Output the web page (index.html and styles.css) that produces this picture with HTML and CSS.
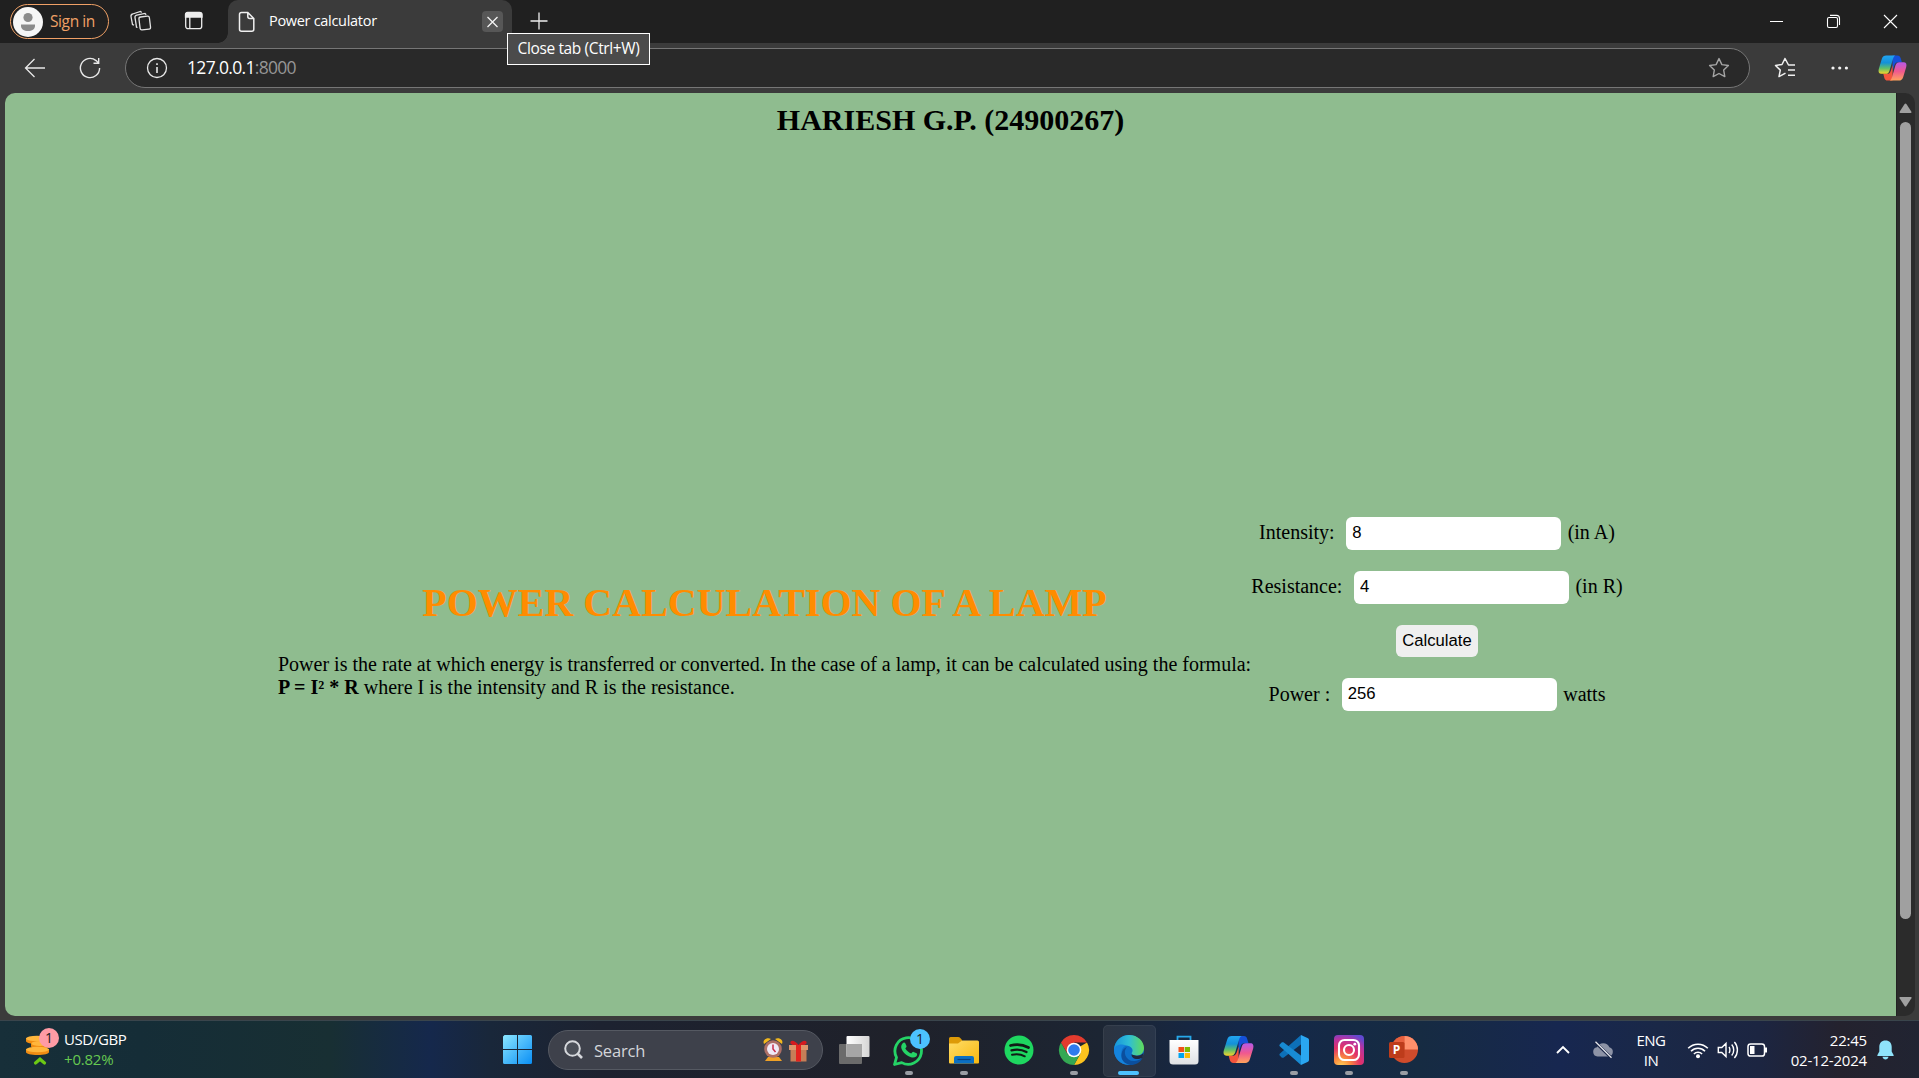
FILE: index.html
```html
<!DOCTYPE html>
<html lang="en">
<head>
<meta charset="utf-8">
<title>Power calculator</title>
<link rel="stylesheet" href="styles.css">
</head>
<body>
<svg width="0" height="0" class="defs" aria-hidden="true">
  <defs>
    <linearGradient id="cpA" x1="0" y1="0" x2="0" y2="1"><stop offset="0" stop-color="#22a5f2"/><stop offset=".4" stop-color="#1391d8"/><stop offset=".7" stop-color="#5fbf6a"/><stop offset="1" stop-color="#f6d32b"/></linearGradient>
    <linearGradient id="cpB" x1="0" y1="0" x2="0" y2="1"><stop offset="0" stop-color="#b659e8"/><stop offset=".5" stop-color="#f0588f"/><stop offset="1" stop-color="#ffa35c"/></linearGradient>
    <symbol id="copilot" viewBox="0 0 30 28">
      <path d="M15 1h5c2 0 3 1.200 3.500 3l1.200 4h-4c-2 0-3 1-3.700 3l-2 6z" fill="#1550d8"/>
      <path d="M15 27h-5c-2 0-3-1.200-3.500-3L5.500 20h4c2 0 3-1 3.700-3l2-6z" fill="#f4553d"/>
      <path d="M8.500 1H18c-1.500.7-2 2-2.600 4l-3.600 12c-.7 2-1.800 3-4 3H3.500C1 20 0 18 .8 15L4 4.500C4.800 2 6.200 1 8.500 1z" fill="url(#cpA)"/>
      <path d="M21.500 27H12c1.500-.7 2-2 2.600-4l3.600-12c.7-2 1.800-3 4-3h4.300c2.500 0 3.500 2 2.700 5L26 23.500c-.8 2.500-2.200 3.500-4.500 3.500z" fill="url(#cpB)"/>
    </symbol>
  </defs>
</svg>

<div class="browser">
  <header class="tabbar">
    <div class="signin">
      <svg width="30" height="30"><circle cx="15" cy="15" r="15" fill="#f6f6f6"/><circle cx="15" cy="10.500" r="4.600" fill="#8b8b8b"/><path d="M8 17.500h14v1.500c0 3-3 5-7 5s-7-2-7-5z" fill="#8b8b8b"/></svg>
      <span>Sign in</span>
    </div>
    <svg class="spaces" width="22" height="22" fill="none" stroke="#e4e4e4" stroke-width="1.300"><rect x="9.500" y="6.500" width="10.500" height="13" rx="1.800" transform="rotate(-7 15 13)"/><path d="M7.500 17.500l-1-.3-1.500-9.500c-.2-1.300.5-2.200 1.700-2.500l8.300-1.800 1.200 1.300"/><path d="M4 15.200l-1.500-.7L1 6.500C.8 5.200 1.500 4.300 2.600 4L10.500 1.500l1.200 1"/></svg>
    <svg class="panes" width="20" height="20" fill="none" stroke="#ededed" stroke-width="1.300"><rect x="1.700" y="1.700" width="16" height="16" rx="2.500"/><path d="M1.500 6V3.500C1.500 2 2.500 1.500 3.500 1.500h12c1.500 0 2.500.8 2.500 2V6z" fill="#ededed"/><path d="M5.800 6v11.500"/></svg>
    <div class="tab">
      <svg width="18" height="22" fill="none" stroke="#f0f0f0" stroke-width="1.500"><path d="M1.500 3.500c0-1.200.8-2 2-2h6.300l6 6v10.800c0 1.200-.8 2-2 2H3.500c-1.200 0-2-.8-2-2zM9.800 1.500v4c0 1.200.8 2 2 2h4"/></svg>
      <span class="tab-title">Power calculator</span>
      <span class="tab-close"><svg width="21" height="21" stroke="#f3f3f3" stroke-width="1.300"><path d="M5.500 6l10 10m0-10l-10 10"/></svg></span>
      <div class="tooltip">Close tab (Ctrl+W)</div>
    </div>
    <svg class="newtab" width="18" height="18" stroke="#eee" stroke-width="1.300"><path d="M9 .5v17M.5 9h17"/></svg>
    <div class="wincontrols">
      <svg width="15" height="15" stroke="#fff" stroke-width="1"><path d="M1 7.500h13"/></svg>
      <svg width="15" height="15" fill="none" stroke="#fff" stroke-width="1.100"><rect x="1.500" y="3.500" width="10" height="10" rx="1.500"/><path d="M4 1.400h6.500c2 0 3 1 3 3V11"/></svg>
      <svg width="15" height="15" stroke="#fff" stroke-width="1.100"><path d="M1 1l13 13M14 1L1 14"/></svg>
    </div>
  </header>

  <div class="toolbar">
    <svg class="back" width="22" height="22" fill="none" stroke="#e8e8e8" stroke-width="1.300"><path d="M21 11H2M10.500 2L1.500 11l9 9"/></svg>
    <svg class="reload" width="22" height="22" fill="none" stroke="#e8e8e8" stroke-width="1.400"><path d="M20.600 11a9.600 9.600 0 1 1-3.500-7.400l2.400 2.400M19.700 1v5.200h-5.200"/></svg>
    <div class="address">
      <svg width="22" height="22" fill="none" stroke="#e8e8e8" stroke-width="1.300"><circle cx="11" cy="11" r="9.500"/><path d="M11 10v6M11 6.200v1.700" stroke-width="1.600"/></svg>
      <span class="url">127.0.0.1<span>:8000</span></span>
      <svg class="star" width="22" height="22" fill="none" stroke="#a5a5a5" stroke-width="1.400" stroke-linejoin="round"><path d="M11 1.600l2.900 6 6.500.9-4.700 4.600 1.100 6.500L11 16.500l-5.800 3.100 1.100-6.500L1.600 8.500l6.500-.9z"/></svg>
    </div>
    <svg class="favs" width="22" height="22" fill="none" stroke="#f0f0f0" stroke-width="1.500" stroke-linejoin="round"><path d="M20 8h-5.500l-3.500-6.500-3 6-6.500 1 4.800 4.600L5 19.600l6.500-3.500M14 13h7M14 18.300h7M16 8h5"/></svg>
    <svg class="dots" width="18" height="4" fill="#f3f3f3"><circle cx="2" cy="2" r="1.600"/><circle cx="8.700" cy="2" r="1.600"/><circle cx="15.400" cy="2" r="1.600"/></svg>
    <svg class="cp" width="29" height="28"><use href="#copilot"/></svg>
  </div>

  <div class="viewport">
    <main class="page">
      <h2 class="owner">HARIESH G.P. (24900267)</h2>
      <section class="calculator">
        <div class="intro">
          <h1>POWER CALCULATION OF A LAMP</h1>
          <p>Power is the rate at which energy is transferred or converted. In the case of a lamp, it can be calculated using the formula:<br><b>P = I² * R</b> where I is the intensity and R is the resistance.</p>
        </div>
        <form class="form">
          <div class="row"><label for="i">Intensity:</label><input id="i" type="text" value="8"><span>(in A)</span></div>
          <div class="row"><label for="r">Resistance:</label><input id="r" type="text" value="4"><span>(in R)</span></div>
          <div class="row"><button type="button">Calculate</button></div>
          <div class="row"><label for="p">Power :</label><input id="p" type="text" value="256"><span>watts</span></div>
        </form>
      </section>
    </main>
    <div class="scrollbar">
      <svg width="13" height="11" fill="#a0a0a0"><path d="M5.600 1c.5-.7 1.300-.7 1.800 0l5 7.800c.4.700 0 1.200-.7 1.200H1.300C.6 10 .2 9.500.6 8.800z"/></svg>
      <i class="thumb"></i>
      <svg width="13" height="11" fill="#a0a0a0"><path d="M5.600 10c.5.700 1.300.7 1.800 0l5-7.800c.4-.7 0-1.200-.7-1.200H1.300C.6 1 .2 1.500.6 2.200z"/></svg>
    </div>
  </div>
</div>

<footer class="taskbar">
  <div class="widget">
    <svg width="34" height="38"><g fill="#f08c13"><path d="M6 28v3c0 2 5 3 11.500 3S29 33 29 31v-3z"/><path d="M11 22v3c0 2 4 3 9 3s9-1 9-3v-3z"/><path d="M6 17v3c0 2 5 3 11.500 3s9-1 9-3v-3z"/></g><g fill="#ffb63c"><ellipse cx="17.500" cy="28.500" rx="11.500" ry="2.800"/><ellipse cx="20" cy="22.500" rx="8.500" ry="2.400"/><ellipse cx="17" cy="17.500" rx="11" ry="2.800"/></g></svg>
    <b class="badge pink">1</b>
    <div class="quote"><span>USD/GBP</span><span class="up">+0.82%</span></div>
    <svg class="caret" width="12" height="8"><path d="M1.500 6L6 2.200 10.500 6" fill="none" stroke="#6cc914" stroke-width="3.200" stroke-linecap="round"/></svg>
  </div>

  <div class="apps">
    <div class="app"><svg width="30" height="30"><defs><linearGradient id="w" x1="0" y1="0" x2="1" y2="1"><stop offset="0" stop-color="#8be6ff"/><stop offset="1" stop-color="#0a8ff5"/></linearGradient></defs><path d="M1.500 0H14v14H0V1.500zM15 0h12.500Q29 0 29 1.500V14H15zM0 15h14v14H1.500Q0 29 0 27.500zM15 15h14v12.500q0 1.500-1.500 1.500H15z" fill="url(#w)"/></svg></div>
    <div class="search">
      <svg width="20" height="20" fill="none" stroke="#d6d8dc" stroke-width="2"><circle cx="8.500" cy="8.500" r="7.300" fill="#4b4f58"/><path d="M13.500 13.500l4.500 4.500" stroke-width="2.600"/></svg>
      <span>Search</span>
      <svg width="46" height="26"><path d="M1 7c-2-4 3-7 7-5zM19 7c2-4-3-7-7-5z" fill="#f3b81d"/><path d="M5 20h11l3 4H2z" fill="#f0a126"/><circle cx="10" cy="12" r="8.800" fill="#ad6f66"/><circle cx="10" cy="12" r="6" fill="#efe9f7"/><path d="M10 7.500V12l2.500 3" fill="none" stroke="#c92c4b" stroke-width="1.500"/><path d="M27.500 12h16v12.500h-16z" fill="#c67e57"/><path d="M26 8h19v5H26z" fill="#dd966b"/><path d="M33 8h5v16.500h-5z" fill="#e3241f"/><path d="M35.500 8c-3-5-9-6-8-1.500l2 1.500zM35.500 8c3-5 9-6 8-1.500l-2 1.500z" fill="#d31b20"/></svg>
    </div>
    <div class="app"><svg width="32" height="30"><defs><linearGradient id="tv"><stop offset="0" stop-color="#fff"/><stop offset="1" stop-color="#d5d5d5"/></linearGradient></defs><rect x="1" y="9" width="23" height="20" rx="1" fill="#6b6b6b"/><rect x="8.500" y="1" width="23" height="21" rx="1" fill="url(#tv)"/><path d="M8.500 9H24v13H8.500z" fill="#a6a6a6"/></svg></div>
    <div class="app running"><svg width="32" height="32"><path d="M1.500 30.500l2-7.200A13.300 13.300 0 1 1 8.700 28.600z" fill="none" stroke="#25d366" stroke-width="2.800" stroke-linejoin="round"/><path d="M9.500 9.500c1-1.300 2.300-1.300 2.900 0l1.100 2.600c.3.700-.5 1.700-1.200 2.500 1.600 2.600 3.500 4 6 5 .9-1 1.500-2 2.300-1.700l3 1.400c1 .6.500 2.300-.4 3.200-2 1.800-4.700 1.200-7.600-.2-3.500-1.700-6-5-7-7.400-.8-2-.4-4 .9-5.400z" fill="#25d366"/></svg><b class="badge blue">1</b></div>
    <div class="app running"><svg width="32" height="30"><defs><linearGradient id="fo" x1="0" y1="0" x2="1" y2="1"><stop offset="0" stop-color="#ffdc67"/><stop offset="1" stop-color="#f8b80f"/></linearGradient></defs><path d="M1 3.500Q1 2 2.500 2H10q1.500 0 2.500 1.200L14 5v8H1z" fill="#dd9a08"/><path d="M1 8.500h9l4-3h15.500Q31 5.500 31 7v20.500q0 1-1 1H2q-1 0-1-1z" fill="url(#fo)"/><path d="M6 28.500V23q0-2 2-2h16q2 0 2 2v5.500z" fill="#0b6fc2"/><path d="M9.500 24.500h13" stroke="#07407f" stroke-width="1.200"/></svg></div>
    <div class="app"><svg width="30" height="30"><circle cx="15" cy="15" r="14.500" fill="#1ed760"/><g fill="none" stroke="#111b16" stroke-linecap="round"><path d="M6.500 10.500c6-1.600 12.500-1 18 2" stroke-width="2.700"/><path d="M7.500 15.300c5-1.300 10.500-.8 15 1.700" stroke-width="2.300"/><path d="M8 19.800c4.500-1 9-.6 12.800 1.500" stroke-width="1.900"/></g></svg></div>
    <div class="app running"><svg width="30" height="30"><path d="M15 15h0L28 7.500A15 15 0 0 1 15 30l6.500-11.500z" fill="#fcc31e"/><path d="M15 30A15 15 0 0 1 2 7.500L8.600 19 15 22l6.300-3.500z" fill="#34a853"/><path d="M15 7.500h13A15 15 0 0 0 2 7.500l6.500 11z" fill="#e33b2e"/><circle cx="15" cy="15" r="7.300" fill="#fff"/><circle cx="15" cy="15" r="5.800" fill="#2f7bee"/></svg></div>
    <div class="app running active"><svg width="30" height="30"><defs><linearGradient id="eg"><stop offset="0" stop-color="#1794db"/><stop offset=".5" stop-color="#2fbed5"/><stop offset="1" stop-color="#61dc58"/></linearGradient></defs><circle cx="15" cy="15" r="15" fill="#0d6fc9"/><path d="M0 14C1 5.500 7.500 0 15 0c9 0 15 6.500 15 13 0 5-3.500 7.500-7.500 7.500-4 0-5.500-1.500-4.500-3 2-3-1-7-6-7C6 10.500 1 14 0 14z" fill="url(#eg)"/><path d="M12 10.500c-3.500 1.500-5 5-4.500 9 .7 5.500 5 9.500 10 10C8 31.500 0 24 0 15c0-4 6-7 12-4.500z" fill="#1583dc"/><path d="M13 12c-5 5-1 15 8 14 3-.3 6-1.700 7.500-3-2 4.500-7 7-12 7C10 29 6.500 24 7.500 19c.5-3.500 2.500-6 5.500-7z" fill="#0b4f9e"/><path d="M28.500 22.500c-5 3-11 1.500-11-3l5 1.200c3 .2 5.500-1 7-3z" fill="#20283c"/></svg></div>
    <div class="app"><svg width="30" height="30"><defs><linearGradient id="ms" x1="0" y1="0" x2="0" y2="1"><stop offset="0" stop-color="#fff"/><stop offset="1" stop-color="#dfe1e4"/></linearGradient></defs><path d="M8.500 6V1.700h13V6" fill="none" stroke="#27a8ea" stroke-width="1.800"/><path d="M.5 5h29v21q0 3.500-3.500 3.500H4Q.5 29.500.5 26z" fill="url(#ms)"/><path d="M9.500 12H15v5H9.500z" fill="#f1511b"/><path d="M15.700 12H21v5h-5.300z" fill="#7fba00"/><path d="M9.500 18H15v5H9.500z" fill="#00a4ef"/><path d="M15.700 18H21v5h-5.300z" fill="#fbbc09"/></svg></div>
    <div class="app"><svg width="31" height="29"><use href="#copilot"/></svg></div>
    <div class="app running"><svg width="30" height="30"><path d="M22 0L1 18.500c-.8.8-.8 1.500 0 2.300l1.600 1.600c.8.600 1.500.6 2.200 0L22.500 9z" fill="#0d70b8"/><path d="M22 30L1 11.500c-.8-.8-.8-1.500 0-2.300l1.600-1.600c.8-.6 1.500-.6 2.200 0L22.500 21z" fill="#188bd3"/><path d="M22 0l7 3.200q1 .5 1 1.800v20q0 1.300-1 1.800L22 30z" fill="#2aa7f2"/></svg></div>
    <div class="app running"><svg width="30" height="30"><defs><radialGradient id="ig" cx=".25" cy="1.050" r="1.150"><stop offset="0" stop-color="#fed45c"/><stop offset=".25" stop-color="#fb8d3e"/><stop offset=".55" stop-color="#e33167"/><stop offset=".8" stop-color="#b833a0"/><stop offset="1" stop-color="#6149d0"/></radialGradient></defs><rect width="30" height="30" rx="4" fill="url(#ig)"/><g fill="none" stroke="#fff" stroke-width="2.100"><rect x="5" y="5" width="20" height="20" rx="5.500"/><circle cx="15" cy="15" r="5"/></g><circle cx="20.800" cy="9.200" r="1.400" fill="#fff"/></svg></div>
    <div class="app running"><svg width="30" height="30"><circle cx="15.500" cy="14.500" r="13.500" fill="#cf4b2b"/><path d="M15.500 14.500V1A13.500 13.500 0 0 0 2 14.500z" fill="#e6603e"/><path d="M15.500 1A13.500 13.500 0 0 1 29 14.500H15.500z" fill="#ff8f6b"/><rect x="0" y="7" width="15.500" height="16" rx="1.500" fill="#bd3c1b"/><text x="7.400" y="19.300" class="ppt">P</text></svg></div>
  </div>

  <div class="tray">
    <svg class="chev" width="16" height="10"><path d="M2 8l6-6 6 6" fill="none" stroke="#fff" stroke-width="1.900"/></svg>
    <svg class="cloud" width="22" height="18"><path d="M5.500 15.500a4.700 4.700 0 0 1-.5-9.300 6.800 6.800 0 0 1 12.400 0 4.800 4.800 0 0 1-.4 9.300z" fill="#8d93a6"/><path d="M3 1l16 15.500" stroke="#1a2547" stroke-width="3"/><path d="M3.500.7l16 16" stroke="#e8e9ee" stroke-width="1.300"/></svg>
    <div class="lang"><span>ENG</span><span>IN</span></div>
    <div class="status">
      <svg width="22" height="18" fill="none" stroke="#fff" stroke-width="1.600"><path d="M1.200 7.300a13.800 13.800 0 0 1 19.600 0M4 10.200a9.800 9.800 0 0 1 14 0M6.900 13a5.800 5.800 0 0 1 8.200 0"/><circle cx="11" cy="15.300" r="2" fill="#fff" stroke="none"/></svg>
      <svg width="22" height="18" fill="none" stroke="#fff" stroke-width="1.400"><path d="M1.300 6.500h3.500L9 2.500v13l-4.200-4H1.300zM12 6c1.200 1.500 1.200 4.500 0 6M14.700 3.500c2.700 3 2.700 8 0 11M17.400 1c4 4.500 4 11.500 0 16"/></svg>
      <svg width="21" height="14" fill="none" stroke="#fff" stroke-width="1.500"><rect x="1" y="1" width="16.500" height="12" rx="2.600"/><path d="M3 3h4.500v8H3z" fill="#fff" stroke="none"/><path d="M19 4.500v5" stroke-width="2"/></svg>
    </div>
    <div class="clock"><span>22:45</span><span>02-12-2024</span></div>
    <svg class="bell" width="17" height="20" fill="#8fe3fa"><path d="M8.500.5c4 0 6.200 2.700 6.200 6.500v4.500l2 3.700c.2.500 0 .8-.5.800H.8c-.5 0-.7-.3-.5-.8l2-3.700V7C2.300 3.200 4.500.5 8.500.5zM5.500 16.800h6c-.4 1.700-1.500 2.700-3 2.700s-2.600-1-3-2.700z"/></svg>
  </div>
</footer>
</body>
</html>
```
FILE: styles.css
```css
* { box-sizing: border-box; }
body {
  margin: 0;
  width: 1919px;
  height: 1078px;
  overflow: hidden;
  display: flex;
  flex-direction: column;
  background: #3b3b3b;
  font-family: "Open Sans", "Noto Sans", sans-serif;
  color: #fff;
}
svg { display: block; flex: none; overflow: visible; }
.defs { position: absolute; }

.browser { height: 1021px; flex: none; display: flex; flex-direction: column; border-bottom: 1px solid #3a454c; }

/* Tab strip */
.tabbar { height: 43px; flex: none; display: flex; background: #202020; }
.signin {
  width: 99px; height: 35px; margin: 4px 0 0 10px; padding-left: 2px;
  display: flex; align-items: center; gap: 7px;
  border: 1.5px solid #efa066; border-radius: 18px;
  color: #efa066; font-size: 15.500px; letter-spacing: -0.4px; white-space: nowrap;
}
.signin span { line-height: 20px; padding-bottom: 2px; }
.spaces { margin: 10px 0 0 21px; }
.panes { margin: 11px 0 0 32px; }
.tab {
  position: relative;
  width: 284px; height: 43px; margin-left: 24px; padding: 0 9px 0 10px;
  display: flex; background: #3b3b3b; border-radius: 10px 10px 0 0;
}
.tab::before {
  content: ""; position: absolute; left: -10px; bottom: 0; width: 10px; height: 10px;
  background: radial-gradient(circle at 0 0, #202020 9.500px, #3b3b3b 10px);
}
.tab > svg { margin-top: 11px; }
.tab-title { margin: 10px 0 0 13px; font-size: 14.500px; line-height: 21px; letter-spacing: -0.3px; white-space: nowrap; }
.tab-close { width: 21px; height: 21px; margin: 11px 0 0 auto; background: #575757; border-radius: 4px; }
.tooltip {
  position: absolute; left: 279px; top: 33px; width: 143px; height: 32px; z-index: 2;
  border: 1px solid #fff; background: #4b4b4b;
  font-size: 15.500px; line-height: 28px; letter-spacing: -0.38px; text-align: center; white-space: nowrap;
}
.newtab { margin: 12px 0 0 18px; }
.wincontrols { margin: 14px 21px 0 auto; display: flex; gap: 42px; }

/* Toolbar */
.toolbar { height: 50px; flex: none; display: flex; align-items: center; }
.back { margin-left: 24px; }
.reload { margin-left: 33px; }
.address {
  width: 1625px; height: 40px; margin-left: 24px; padding: 0 19px 0 20px;
  display: flex; align-items: center;
  background: #292929; border: 1px solid #767676; border-radius: 20px;
}
.url { margin-left: 19px; padding-bottom: 2px; font-size: 17.500px; line-height: 24px; letter-spacing: -0.68px; }
.url span { color: #969696; }
.star { margin-left: auto; }
.favs { margin-left: 24px; }
.dots { margin-left: 35px; }
.cp { margin-left: 29px; }

/* Web page */
.viewport { height: 923px; margin: 0 4px 0 5px; display: flex; }
.page {
  width: 1891px; height: 923px; padding-top: 10px;
  display: flex; flex-direction: column;
  background: #8fbc8f; color: #000; border-radius: 10px 0 0 10px;
  font: 20px/23px "Liberation Serif", "Times New Roman", serif;
}
.owner { margin: 0; font-size: 30px; line-height: 34px; text-align: center; }
.calculator { margin-top: 380px; display: flex; justify-content: center; }
.intro { width: 973px; padding-top: 63px; }
.intro h1 { margin: 0; font-size: 40px; line-height: 46px; color: #ff8c00; text-align: center; white-space: nowrap; }
.intro p { margin: 27px 0 0; white-space: nowrap; }
.form { width: 372px; display: flex; flex-direction: column; gap: 20.800px; }
.row { height: 33px; display: flex; align-items: center; justify-content: center; }
.row label, .row span { padding-bottom: 1.500px; }
.row input {
  width: 215px; height: 33px; margin: 0 6.500px 0 11.500px; padding: 0 6px 1px;
  border: 0; border-radius: 6px; background: #fff;
  font: 16.670px "Liberation Sans", Arial, sans-serif; color: #000;
}
.row button {
  width: 82px; height: 32px; padding: 0; border: 0; border-radius: 6px;
  background: #efefef; color: #000; font: 16.670px "Liberation Sans", Arial, sans-serif;
}
.scrollbar {
  width: 19px; padding: 10px 2px 9px 0; display: flex; flex-direction: column; align-items: center;
  background: #2b2b2b; border-left: 1px solid #222; border-radius: 0 10px 10px 0;
}
.thumb { width: 11px; height: 797px; margin: 8px 0 auto; background: #a0a0a0; border-radius: 6px; }

/* Taskbar */
.taskbar {
  height: 57px; flex: none; display: flex;
  background: linear-gradient(90deg, #172f39 0, #152d37 140px, #182f33 330px, #15284c 430px, #19273a 490px, #1d2230 600px, #1f212a 900px, #1c2533 1100px, #14284a 1240px, #162b42 1420px, #172750 1560px, #1a2847 1660px, #1c2541 1760px, #24222e 1840px, #212432 100%);
}
.widget { position: relative; width: 490px; display: flex; padding-left: 20px; }
.quote { margin: 8px 0 0 10px; display: flex; flex-direction: column; font-size: 15px; line-height: 20px; letter-spacing: -0.4px; }
.quote .up { color: #66c951; letter-spacing: -0.2px; }
.caret { position: absolute; left: 34px; top: 36px; }
.badge {
  position: absolute; width: 20px; height: 20px; border-radius: 50%;
  color: #202020; font-size: 14px; font-weight: 400; line-height: 20px; text-align: center;
}
.pink { left: 39px; top: 7px; background: #ff9ba5; }
.blue { left: 29px; top: 8px; background: #4cc2ff; }
.apps { display: flex; }
.app { position: relative; width: 55px; height: 57px; display: flex; align-items: center; justify-content: center; }
.running::after {
  content: ""; position: absolute; left: 24px; bottom: 3px; width: 8px; height: 4px;
  border-radius: 2px; background: #9a9da4;
}
.active::before {
  content: ""; position: absolute; left: 2px; top: 4px; width: 51px; height: 50px;
  border-radius: 5px; background: rgba(255,255,255,.07); border: 1px solid rgba(255,255,255,.06);
}
.active svg { position: relative; }
.active::after { left: 17px; width: 21px; background: #4cc2ff; }
.search {
  width: 275px; height: 40px; margin: 9px 3px 0 3px; padding: 0 13px 0 15px;
  display: flex; align-items: center;
  border: 1px solid #555962; border-radius: 20px; background: #3e414b;
}
.search span { margin-left: 10px; font-size: 16.500px; letter-spacing: -0.2px; color: #d3d5d9; }
.search svg:last-child { margin-left: auto; }
.ppt { font: bold 12px "Open Sans", sans-serif; fill: #fff; text-anchor: middle; }

.tray { margin-left: auto; display: flex; align-items: center; padding-right: 25px; }
.chev { margin-right: 21px; }
.cloud { margin-right: 21px; }
.lang, .clock { display: flex; flex-direction: column; font-size: 15px; line-height: 20px; letter-spacing: -0.2px; }
.lang { width: 32px; align-items: center; letter-spacing: -0.5px; }
.status { margin-left: 20px; display: flex; align-items: center; gap: 8px; }
.clock { width: 80px; margin-left: 19px; align-items: flex-end; white-space: nowrap; }
.bell { margin-left: 10px; }
```
